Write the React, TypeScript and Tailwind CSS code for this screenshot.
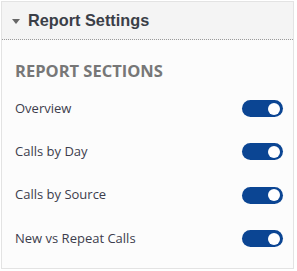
const sections = ["Overview", "Calls by Day", "Calls by Source", "New vs Repeat Calls"];

const Toggle = () => (
  <div className="relative w-[41px] h-[17px] rounded-full bg-[#0b4593] shrink-0">
    <span className="absolute right-[3px] top-[2.5px] w-[12px] h-[12px] rounded-full bg-white" />
  </div>
);

export default function App() {
  return (
    <div className="w-[297px] h-[271px] bg-white pt-[1px] pl-[1px]">
      <div className="w-[293px] h-[268px] border border-[#e3e3e3] bg-[#fcfcfc] flex flex-col">
        <div className="h-[38px] bg-[#f4f4f4] border-b border-dotted border-[#9a9a9a] flex items-center pl-[10px] gap-[8px]">
          <svg width="8" height="5" viewBox="0 0 8 5" className="mt-[1px]">
            <path d="M0 0 L8 0 L4 5 Z" fill="#666" />
          </svg>
          <span className="font-['Liberation_Sans',Arial,sans-serif] font-bold text-[16.3px] text-[#3b3f48]">
            Report Settings
          </span>
        </div>
        <div className="pl-[13px] pr-[10px] pt-[21px]">
          <div className="font-['Open_Sans',sans-serif] font-bold text-[16.5px] text-[#777] leading-[20px] mb-[6px]">
            REPORT SECTIONS
          </div>
          <div className="flex flex-col">
            {sections.map((s) => (
              <div key={s} className="h-[43.3px] flex items-center justify-between">
                <span className="font-['Open_Sans',sans-serif] text-[13px] text-[#3d3d4d]">{s}</span>
                <Toggle />
              </div>
            ))}
          </div>
        </div>
      </div>
    </div>
  );
}
